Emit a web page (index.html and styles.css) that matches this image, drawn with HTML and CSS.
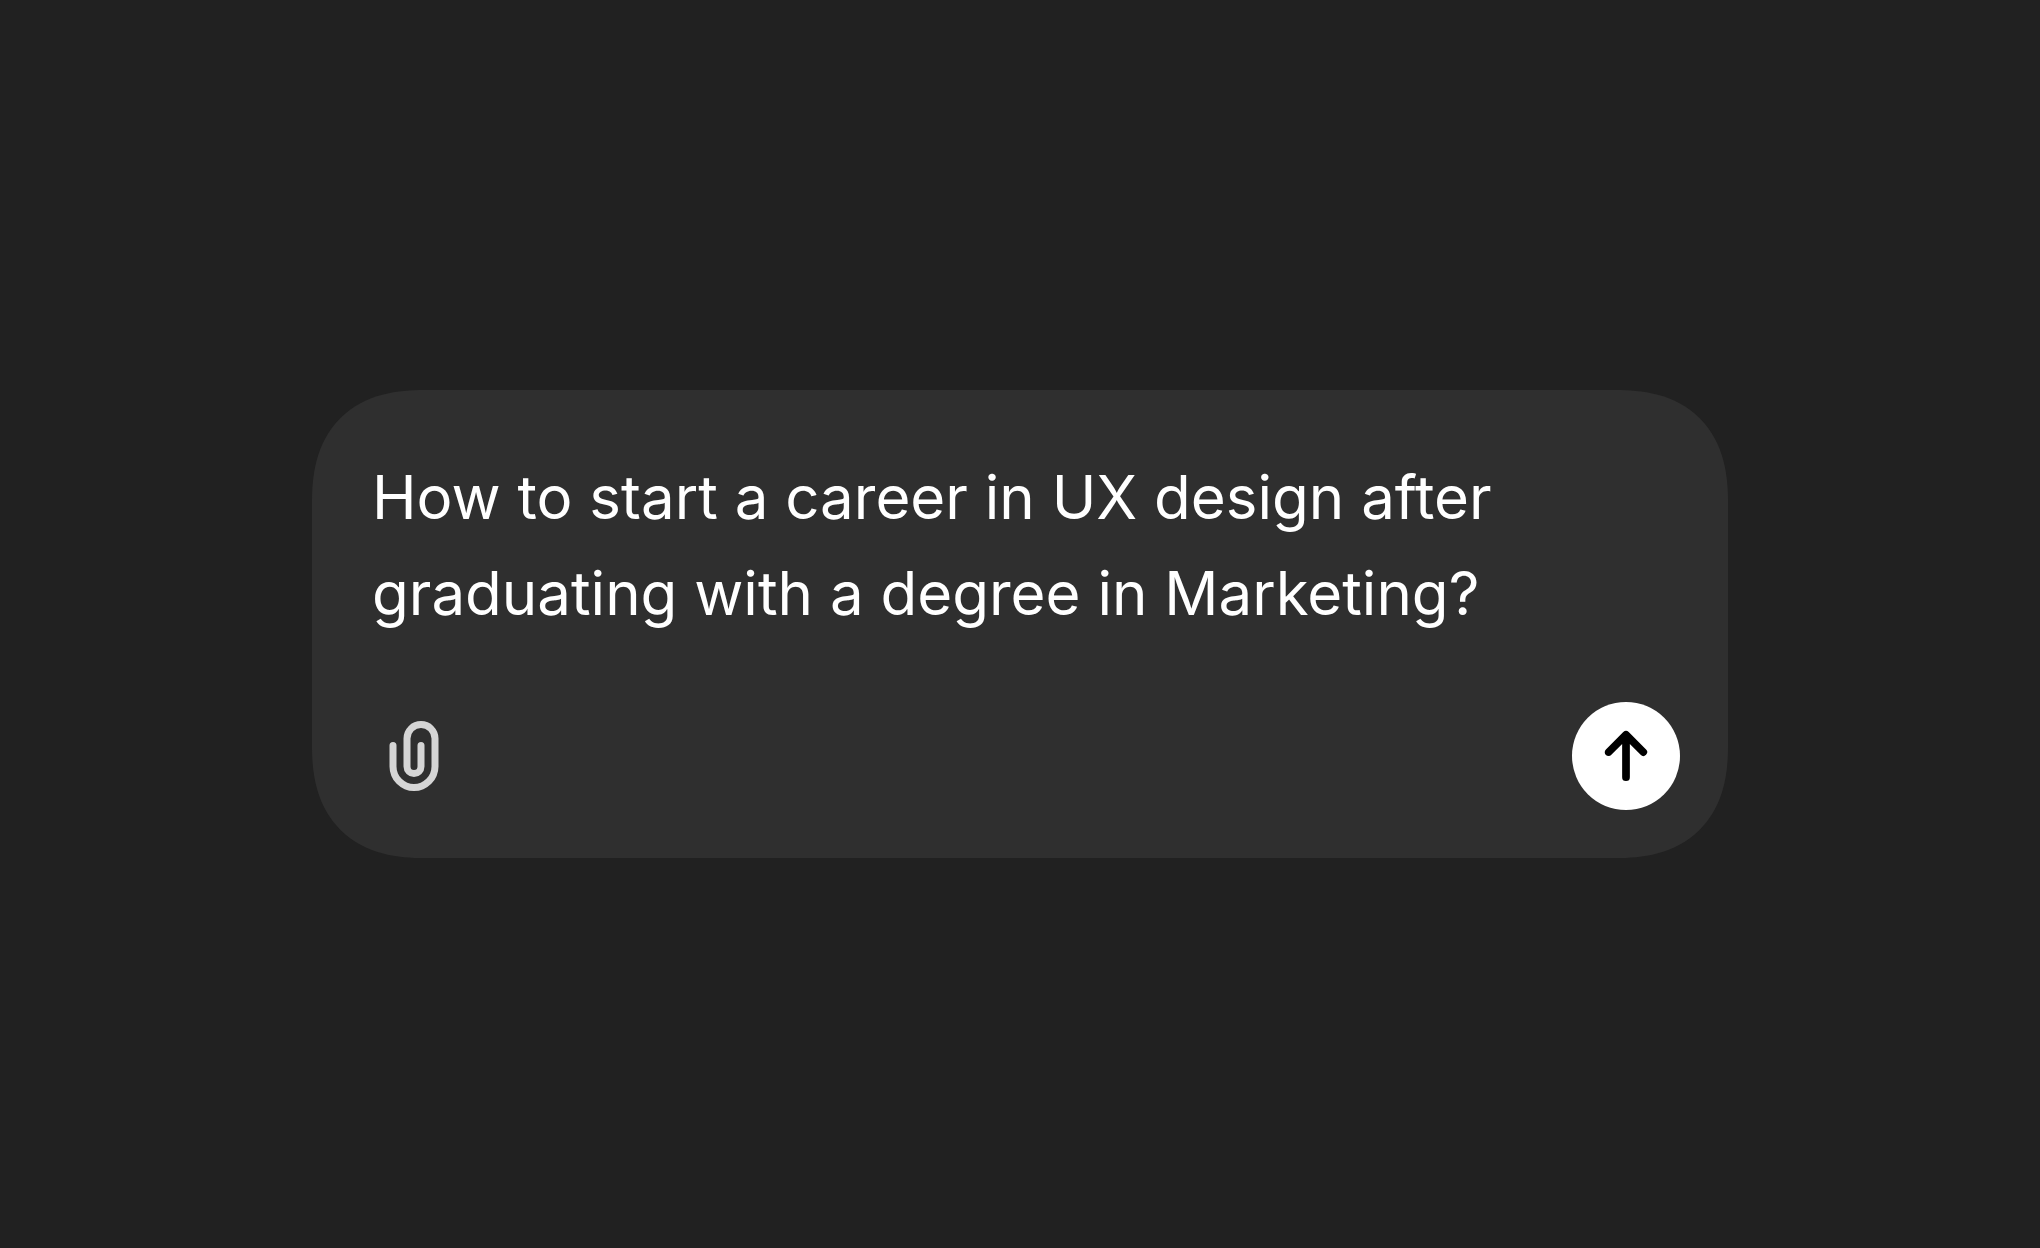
FILE: index.html
```html
<!DOCTYPE html>
<html lang="en">
<head>
    <meta charset="UTF-8">
    <meta name="viewport" content="width=device-width, initial-scale=1.0">
    <title>Chat prompt</title>
    <link rel="stylesheet" href="styles.css">
</head>
<body>
<form class="composer">
    <textarea class="prompt" rows="2" aria-label="Message" spellcheck="false">How to start a career in UX design after graduating with a degree in Marketing?</textarea>
    <div class="actions">
        <button type="button" class="attach" aria-label="Attach file">
            <svg viewBox="0 0 24 24" fill="currentColor">
                <path fill-rule="evenodd" clip-rule="evenodd" d="M9 7a5 5 0 0 1 10 0v8a7 7 0 1 1-14 0V9a1 1 0 0 1 2 0v6a5 5 0 0 0 10 0V7a3 3 0 1 0-6 0v8a1 1 0 1 0 2 0V9a1 1 0 1 1 2 0v6a3 3 0 1 1-6 0z"/>
            </svg>
        </button>
        <button type="submit" class="send" aria-label="Send message">
            <svg viewBox="0 0 32 32" fill="currentColor">
                <path d="M15.192 8.906a1.143 1.143 0 0 1 1.616 0l5.143 5.143a1.143 1.143 0 0 1-1.616 1.616l-3.192-3.192v9.813a1.143 1.143 0 0 1-2.286 0v-9.813l-3.192 3.192a1.143 1.143 0 1 1-1.616-1.616z"/>
            </svg>
        </button>
    </div>
</form>
</body>
</html>
```
FILE: styles.css
```css
* {
    box-sizing: border-box;
}

body {
    margin: 0;
    min-height: 100vh;
    display: flex;
    align-items: center;
    justify-content: center;
    padding: 24px;
    background: #212121;
    color: #fff;
    font-family: Inter, "Liberation Sans", sans-serif;
}

.composer {
    display: flex;
    flex-direction: column;
    gap: 61px;
    width: 100%;
    max-width: 1416px;
    padding: 59px 48px 48px 60px;
    background: #2f2f2f;
    border-radius: 90px;
}

/* smoother corners where the browser has them */
@supports (corner-shape: superellipse(1.25)) {
    .composer {
        border-radius: 112px;
        corner-shape: superellipse(1.25);
    }
}

.prompt {
    display: block;
    width: 100%;
    margin: 0;
    padding: 0;
    border: none;
    outline: none;
    resize: none;
    overflow: hidden;
    background: transparent;
    color: inherit;
    font-family: inherit;
    font-size: 60px;
    line-height: 96px;
}

.actions {
    display: flex;
    align-items: center;
    justify-content: space-between;
}

button {
    display: block;
    padding: 0;
    border: none;
    cursor: pointer;
}

button svg {
    display: block;
    width: 100%;
    height: 100%;
}

.attach {
    width: 84px;
    height: 84px;
    background: transparent;
    color: #d5d5d5;
}

.send {
    width: 108px;
    height: 108px;
    border-radius: 50%;
    background: #fff;
    color: #000;
}
```
